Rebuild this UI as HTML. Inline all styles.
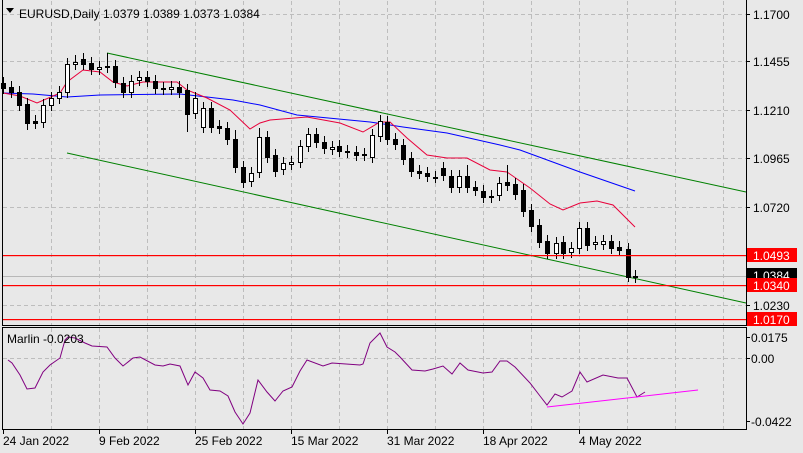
<!DOCTYPE html>
<html><head><meta charset="utf-8"><style>
body{margin:0;background:#e8e8e8;width:803px;height:453px;overflow:hidden;font-family:"Liberation Sans",sans-serif}
svg{display:block}
text{font-family:"Liberation Sans",sans-serif;font-size:12px;fill:#000}
.rl{stroke:#ff0000;stroke-width:1.2}
</style></head><body>
<svg id="s" width="803" height="453" viewBox="0 0 803 453" xmlns="http://www.w3.org/2000/svg">
<rect width="803" height="453" fill="#e8e8e8"/>
<g id="grid" stroke="#bdbdbd" stroke-dasharray="4,3" stroke-width="1"></g>
<line x1="2" y1="276.5" x2="746" y2="276.5" stroke="#b8b8b8"/>
<line x1="107" y1="53" x2="746" y2="192" stroke="#008000"/>
<line x1="67" y1="153" x2="746" y2="303" stroke="#008000"/>
<polyline fill="none" stroke="#0000ff" points="3,93 33,94 67,97 100,95 180,94 207,97 233,100 260,105 297,115 370,122 403,127 447,133 500,145 520,150 580,172 635,191"/>
<polyline fill="none" stroke="#e8003a" points="3,93 20,96 37,103 60,93 67,82 83,70 100,72 113,82 127,86 143,82 177,82 187,90 207,98 230,110 250,129 260,123 270,120 307,117 340,123 363,132 380,122 390,122 407,138 427,155 447,158 467,158 490,170 507,172 530,188 550,204 563,210 580,203 597,201 613,205 635,227"/>
<g id="c"></g>
<rect x="3" y="255" width="743" height="1.2" fill="#ff0000"/>
<rect x="3" y="285" width="743" height="1.2" fill="#ff0000"/>
<rect x="3" y="319" width="743" height="1.2" fill="#ff0000"/>
<polyline fill="none" stroke="#800080" points="8,360 12,363 20,375 27,389 35,388 43,372 50,365 60,358 65,340 68,337 75,338 85,343 92,346 107,347 115,358 123,366 133,358 140,357 155,365 163,366 170,364 180,366 188,385 195,372 203,378 210,390 220,391 228,396 235,412 243,424 250,413 258,380 267,392 275,401 283,391 292,387 300,371 307,360 323,366 332,363 360,365 363,364 370,343 380,333 387,347 395,352 400,357 412,370 425,371 433,369 443,366 452,374 460,363 468,370 483,373 492,372 500,361 507,361 515,367 530,383 540,396 547,405 555,394 562,397 572,391 580,372 587,382 603,375 618,378 627,378 637,397 645,392"/>
<line x1="547" y1="407" x2="698" y2="390" stroke="#ff00ff"/>
<g fill="none" stroke="#000">
<polyline points="2.5,0 2.5,325.5 746.5,325.5 746.5,0"/>
<rect x="2.5" y="327.5" width="744" height="102"/>
</g>
<g id="ax" stroke="#000"></g>
<path d="M6 8 L14 8 L10 13 Z" fill="#000"/>
<text x="19" y="18">EURUSD,Daily  1.0379 1.0389 1.0373 1.0384</text>
<text x="7" y="343">Marlin -0.0203</text>
<g id="lab"></g>
</svg>
<script>
var NS="http://www.w3.org/2000/svg";
function el(p,t,a,txt){var e=document.createElementNS(NS,t);for(var k in a)e.setAttribute(k,a[k]);if(txt)e.textContent=txt;document.getElementById(p).appendChild(e);return e;}
var vx=[51,99,147,195,243,291,339,387,435,483,531,579,627,675,723];
vx.forEach(function(x){el("grid","line",{x1:x+.5,y1:1,x2:x+.5,y2:325});el("grid","line",{x1:x+.5,y1:328,x2:x+.5,y2:429});});
[14,61,110,158,207,305].forEach(function(y){el("grid","line",{x1:3,y1:y+.5,x2:746,y2:y+.5});});
el("grid","line",{x1:3,y1:358.5,x2:746,y2:358.5});
var d=[[3,83,88,0],[11,87,92,0],[19,92,105,0],[27,104,123,0],[35,121,123,0],[43,105,122,1],[51,98,105,1],[59,92,98,1],[67,64,92,1],[75,62,64,1],[83,59,64,0],[91,63,69,0],[99,67,69,1],[107,66,67,0],[115,66,82,0],[123,83,92,0],[131,81,92,1],[139,77,80,1],[147,77,81,0],[155,81,88,0],[163,88,89,0],[171,87,89,1],[179,87,92,0],[187,90,114,0],[195,98,113,1],[203,108,127,1],[211,108,127,0],[219,126,128,0],[227,128,139,0],[235,139,167,0],[243,167,182,0],[251,173,181,1],[259,137,172,1],[267,137,157,0],[275,155,171,0],[283,163,169,1],[291,162,164,1],[300,146,162,1],[308,134,146,1],[316,134,142,0],[324,142,148,0],[332,147,149,1],[339,146,151,0],[347,151,152,0],[356,152,155,0],[364,154,155,0],[372,135,157,1],[380,121,136,1],[387,122,139,0],[395,139,144,0],[403,145,159,0],[411,158,171,0],[419,171,173,0],[427,173,176,0],[435,177,177,0],[443,168,175,0],[451,176,187,0],[459,176,187,1],[467,176,187,0],[475,187,190,0],[483,191,197,0],[491,196,197,0],[499,183,195,1],[507,182,185,0],[515,184,194,0],[523,190,211,0],[531,210,226,0],[539,225,242,0],[547,241,253,0],[556,243,253,1],[563,242,253,0],[571,248,252,1],[579,228,248,1],[587,228,245,0],[595,242,244,1],[603,241,244,1],[611,241,248,0],[619,247,250,0],[628,249,277,0],[635,276,277,0]];
var wk={27:130,75:55,107:53,187:132,235:130,467:165,507:165,628:282,259:128,380:115};
d.forEach(function(c){var x=c[0],t=c[1],b=c[2];var ht=t-6,lb=b+6;if(x in wk){if(wk[x]<t)ht=wk[x];else lb=wk[x];}
el("c","line",{x1:x+.5,y1:ht,x2:x+.5,y2:lb,stroke:"#000"});
var h=Math.max(b-t,1);el("c","rect",{x:x-2+.5,y:t+.5,width:4,height:h,fill:c[3]?"#fff":"#000",stroke:"#000"});});
var pl=[["1.1700",14],["1.1455",61],["1.1210",110],["1.0965",158],["1.0720",207],["1.0230",305]];
pl.forEach(function(p){el("ax","line",{x1:746,y1:p[1]+.5,x2:750,y2:p[1]+.5});el("lab","text",{x:753,y:p[1]+5},p[0]);});
[["0.0175",337],["0.00",358],["-0.0422",421]].forEach(function(p){el("ax","line",{x1:746,y1:p[1]+.5,x2:750,y2:p[1]+.5});el("lab","text",{x:751,y:p[1]+5},p[0]);});
[["1.0493",255,"#ff0000","#fff"],["1.0384",275,"#000","#fff"],["1.0340",285,"#ff0000","#fff"],["1.0170",319,"#ff0000","#fff"]].forEach(function(p){el("lab","rect",{x:747,y:p[1]-7,width:50,height:14,fill:p[2]});el("lab","text",{x:753,y:p[1]+5,style:"fill:"+p[3]},p[0]);});
[["24 Jan 2022",3],["9 Feb 2022",99],["25 Feb 2022",195],["15 Mar 2022",291],["31 Mar 2022",387],["18 Apr 2022",483],["4 May 2022",579]].forEach(function(p){el("ax","line",{x1:p[1]+.5,y1:430,x2:p[1]+.5,y2:434});el("lab","text",{x:p[1],y:445},p[0]);});
</script>
</body></html>
